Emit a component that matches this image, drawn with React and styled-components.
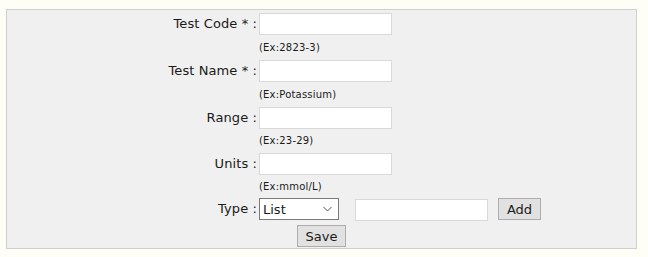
import { Fragment } from "react"
import styled, { createGlobalStyle } from "styled-components"

const Global = createGlobalStyle`
  body {
    margin: 0;
    background: #fefef7;
    font-family: "DejaVu Sans", Verdana, sans-serif;
    color: #1a1a1a;
  }
`
const Page = styled.div`
  padding: 9px 12px 0 6px;
`
const Panel = styled.div`
  width: 629px;
  height: 235px;
  border: 1px solid #cfcfcf;
  background: #f0f0f0;
  padding-top: 3px;
  box-sizing: content-box;
`
const Form = styled.div`
  display: grid;
  grid-template-columns: 250px auto;
  column-gap: 2px;
`
const Label = styled.div`
  text-align: right;
  font-size: 13px;
  height: 22px;
  line-height: 22px;
  white-space: nowrap;
  letter-spacing: 0.1px;
`
const Field = styled.div`
  display: flex;
  align-items: center;
  height: 22px;
`
const Hint = styled.div`
  grid-column: 2;
  font-size: 10px;
  height: ${(p) => p.h || 25}px;
  line-height: ${(p) => p.h || 25}px;
  letter-spacing: 0.2px;
`
const Input = styled.input`
  width: 133px;
  height: 22px;
  box-sizing: border-box;
  border: 1px solid #d9d9d9;
  background: #fff;
  margin: 0;
  padding: 1px 3px;
  font: inherit;
  outline: none;
`
const Select = styled.div`
  width: 80px;
  height: 22px;
  box-sizing: border-box;
  border: 1px solid #7a7a7a;
  background: #fff;
  display: flex;
  align-items: center;
  justify-content: space-between;
  padding: 0 6px 0 3px;
  font-size: 13px;
  svg {
    width: 9px;
    height: 6px;
  }
`
const ValueInput = styled(Input)`
  margin-left: 16px;
  margin-top: 2px;
`
const Button = styled.button`
  height: 22px;
  width: ${(p) => p.w}px;
  box-sizing: border-box;
  border: 1px solid #adadad;
  background: #e1e1e1;
  font-family: "DejaVu Sans", Verdana, sans-serif;
  font-size: 13px;
  color: #1a1a1a;
  padding: 0;
  margin: 0 0 0 ${(p) => p.ml || 0}px;
`
const SaveRow = styled.div`
  display: flex;
  justify-content: center;
  margin-top: 5px;
`

const rows = [
  { label: "Test Code * :", hint: "(Ex:2823-3)" },
  { label: "Test Name * :", hint: "(Ex:Potassium)" },
  { label: "Range :", hint: "(Ex:23-29)", h: 24 },
  { label: "Units :", hint: "(Ex:mmol/L)", h: 23 },
]

export default function App() {
  return (
    <Page>
      <Global />
      <Panel>
        <Form>
          {rows.map((r) => (
            <Fragment key={r.label}>
              <Label>{r.label}</Label>
              <Field>
                <Input />
              </Field>
              <Hint h={r.h}>{r.hint}</Hint>
            </Fragment>
          ))}
          <Label>Type :</Label>
          <Field>
            <Select>
              <span>List</span>
              <svg viewBox="0 0 9 6">
                <path d="M0.5 1 L4.5 5 L8.5 1" fill="none" stroke="#555" strokeWidth="1" />
              </svg>
            </Select>
            <ValueInput />
            <Button w={43} ml={10}>Add</Button>
          </Field>
        </Form>
        <SaveRow>
          <Button w={49}>Save</Button>
        </SaveRow>
      </Panel>
    </Page>
  )
}
